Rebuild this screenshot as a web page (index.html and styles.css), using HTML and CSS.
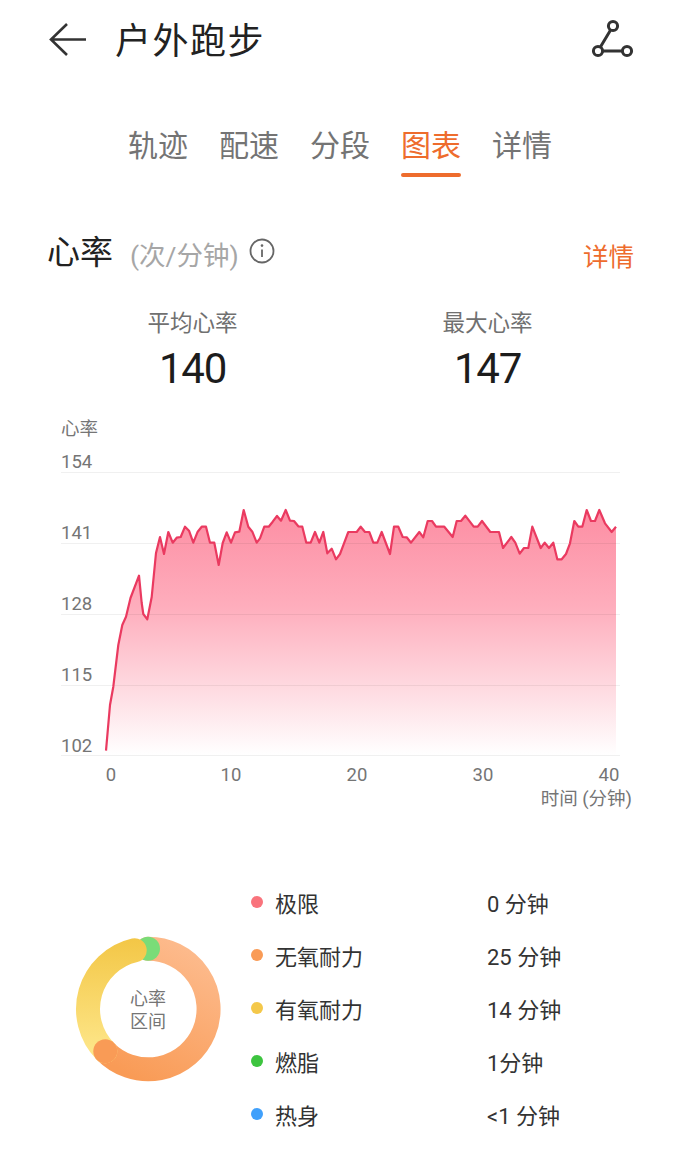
FILE: index.html
```html
<!DOCTYPE html>
<html lang="zh">
<head>
  <meta charset="UTF-8">
  <title>户外跑步</title>
  <link rel="stylesheet" href="styles.css">
</head>
<body>
  <div class="header">
    <svg class="back-icon" width="40" height="36" viewBox="0 0 40 36">
      <path d="M38 17.5H3M19 2L3 17.5L19 33"/>
    </svg>
    <h1 class="title">户外跑步</h1>
    <svg class="route-icon" width="46" height="42" viewBox="0 0 46 42">
      <circle cx="23" cy="7" r="4.6"/>
      <circle cx="8" cy="32" r="4.6"/>
      <circle cx="37" cy="32" r="4.6"/>
      <path d="M20.6 11L10.4 28M12.6 32H32.4"/>
    </svg>
  </div>

  <div class="tabs">
    <div class="tab">轨迹</div>
    <div class="tab">配速</div>
    <div class="tab">分段</div>
    <div class="tab active">图表</div>
    <div class="tab">详情</div>
  </div>

  <div class="section-head">
    <span class="section-title">心率</span>
    <span class="section-unit">(次/分钟)</span>
    <svg class="info-icon" width="26" height="26" viewBox="0 0 26 26">
      <circle cx="13" cy="13" r="11.5"/>
      <path d="M13 11.5V19"/>
      <circle class="info-dot" cx="13" cy="7.6" r="1.3"/>
    </svg>
    <span class="section-link">详情</span>
  </div>

  <div class="stats">
    <div class="stat">
      <div class="stat-label">平均心率</div>
      <div class="stat-value">140</div>
    </div>
    <div class="stat">
      <div class="stat-label">最大心率</div>
      <div class="stat-value">147</div>
    </div>
  </div>

  <svg class="chart" width="680" height="405" viewBox="0 410 680 405">
    <defs>
      <linearGradient id="area" gradientUnits="userSpaceOnUse" x1="0" y1="510" x2="0" y2="755">
        <stop offset="0" stop-color="#fd8ea3"/>
        <stop offset="0.4" stop-color="#feaebd"/>
        <stop offset="0.75" stop-color="#fedde3"/>
        <stop offset="1" stop-color="#ffffff"/>
      </linearGradient>
    </defs>
    <text class="axis" x="61" y="435">心率</text>
    <text class="axis" x="61" y="468">154</text>
    <text class="axis" x="61" y="539">141</text>
    <text class="axis" x="61" y="610">128</text>
    <text class="axis" x="61" y="681">115</text>
    <text class="axis" x="61" y="752">102</text>
    <polygon class="area" points="106,755 106,750.7 110,705 113.3,686.7 118.3,645 122.3,625 126,616.7 130.5,598 139,575.7 141.7,603 143.3,614 147.3,619.3 151.7,597 156,553 160,537 164,554 168.3,532 172.7,542.7 176.7,537.7 180.7,537 185,526.7 189,530.7 193.3,542.7 197.7,531.7 201.7,526.7 206,526.7 210,542.7 214.3,542.7 218.7,565 222.7,543 226.7,532.3 231,542.7 235,532.3 239.3,531.7 243.7,510 248.3,526.7 252.3,531.7 256.7,542.7 260,538.3 264.3,526.7 268.7,526.7 272.7,521.7 277,516 281,520.7 285.7,510 290,520.7 294,521 298.3,526.3 302.3,526.7 306.3,542.7 310.7,542.7 315,532 319.3,542.7 323.3,532 327.3,553.3 331.7,548.7 336,559.3 340,554 344,543.3 348.3,532 356.7,532 360.7,526.7 365,532 369.3,532 373.3,542.7 377.3,542.7 381.7,532 390,554 394,526.7 398.3,526.7 402.7,537 406.7,537.3 411,542.7 419.3,532 423.3,537.3 427.7,521 432,521 436,526.7 444.3,526.7 452.7,537 456.7,521 461,521 465.3,515.7 473.7,526.7 477.7,526.7 482,521 490.3,532 499,532 503,548 511.3,537 515.3,542.7 519.7,553.7 524,548 528.3,548 532.3,526.7 540.7,548 544.7,542.7 549,548 553.3,542.7 557.3,559.3 561.7,559.3 566,554 570,543.3 574.3,521 578.3,526.7 582.3,526.7 586.7,510 591,521 595,521 599.3,510 605,523.3 611.7,532 616,526.7 616,755"/>
    <path class="grid" d="M61 472.5H620M61 543.5H620M61 614.5H620M61 685.5H620M61 755.5H620"/>
    <polyline class="line" points="106,750.7 110,705 113.3,686.7 118.3,645 122.3,625 126,616.7 130.5,598 139,575.7 141.7,603 143.3,614 147.3,619.3 151.7,597 156,553 160,537 164,554 168.3,532 172.7,542.7 176.7,537.7 180.7,537 185,526.7 189,530.7 193.3,542.7 197.7,531.7 201.7,526.7 206,526.7 210,542.7 214.3,542.7 218.7,565 222.7,543 226.7,532.3 231,542.7 235,532.3 239.3,531.7 243.7,510 248.3,526.7 252.3,531.7 256.7,542.7 260,538.3 264.3,526.7 268.7,526.7 272.7,521.7 277,516 281,520.7 285.7,510 290,520.7 294,521 298.3,526.3 302.3,526.7 306.3,542.7 310.7,542.7 315,532 319.3,542.7 323.3,532 327.3,553.3 331.7,548.7 336,559.3 340,554 344,543.3 348.3,532 356.7,532 360.7,526.7 365,532 369.3,532 373.3,542.7 377.3,542.7 381.7,532 390,554 394,526.7 398.3,526.7 402.7,537 406.7,537.3 411,542.7 419.3,532 423.3,537.3 427.7,521 432,521 436,526.7 444.3,526.7 452.7,537 456.7,521 461,521 465.3,515.7 473.7,526.7 477.7,526.7 482,521 490.3,532 499,532 503,548 511.3,537 515.3,542.7 519.7,553.7 524,548 528.3,548 532.3,526.7 540.7,548 544.7,542.7 549,548 553.3,542.7 557.3,559.3 561.7,559.3 566,554 570,543.3 574.3,521 578.3,526.7 582.3,526.7 586.7,510 591,521 595,521 599.3,510 605,523.3 611.7,532 616,526.7"/>
    <text class="axis mid" x="111" y="781">0</text>
    <text class="axis mid" x="231" y="781">10</text>
    <text class="axis mid" x="357" y="781">20</text>
    <text class="axis mid" x="483" y="781">30</text>
    <text class="axis mid" x="609" y="781">40</text>
    <text class="axis end" x="632" y="805">时间 (分钟)</text>
  </svg>

  <div class="zones">
    <div class="donut">
      <svg width="152" height="152" viewBox="72 933 152 152">
        <defs>
          <linearGradient id="orange" gradientUnits="userSpaceOnUse" x1="190" y1="940" x2="120" y2="1070">
            <stop offset="0" stop-color="#fdbc8f"/>
            <stop offset="1" stop-color="#f99b56"/>
          </linearGradient>
          <linearGradient id="yellow" gradientUnits="userSpaceOnUse" x1="0" y1="940" x2="0" y2="1050">
            <stop offset="0" stop-color="#f3c747"/>
            <stop offset="1" stop-color="#fde587"/>
          </linearGradient>
        </defs>
        <path class="ring ring-orange" d="M148 948.7A60.3 60.3 0 1 1 105.3 1051.3"/>
        <circle class="ring-green" cx="148" cy="948.7" r="12"/>
        <path class="ring ring-yellow" d="M105.3 1051.3A60.3 60.3 0 0 1 134.7 950.3"/>
        <circle class="ring-tail" cx="105.3" cy="1051.3" r="12"/>
      </svg>
      <div class="donut-label">心率<br>区间</div>
    </div>
    <div class="legend">
      <div class="legend-row"><span class="dot dot-red"></span><span>极限</span><span>0 分钟</span></div>
      <div class="legend-row"><span class="dot dot-orange"></span><span>无氧耐力</span><span>25 分钟</span></div>
      <div class="legend-row"><span class="dot dot-yellow"></span><span>有氧耐力</span><span>14 分钟</span></div>
      <div class="legend-row"><span class="dot dot-green"></span><span>燃脂</span><span>1分钟</span></div>
      <div class="legend-row"><span class="dot dot-blue"></span><span>热身</span><span>&lt;1 分钟</span></div>
    </div>
  </div>
</body>
</html>
```

FILE: styles.css
```css
body {
  font-family: Roboto, "Noto Sans CJK SC", sans-serif;
  background-color: #fff;
  color: #222;
  width: 680px;
  height: 1164px;
  margin: 0;
  overflow: hidden;
}
.header {
  display: flex;
  align-items: center;
  height: 80px;
  padding: 0 46px 0 48px;
}
.back-icon {
  fill: none;
  stroke: #333;
  stroke-width: 2.6;
  margin-right: 27px;
}
.title {
  flex: 1;
  margin: 0 0 4px;
  font-size: 36px;
  font-weight: 400;
  letter-spacing: 1.5px;
}
.route-icon {
  fill: none;
  stroke: #333;
  stroke-width: 3;
  margin-right: -2px;
}
.tabs {
  display: flex;
  justify-content: center;
  gap: 31px;
  margin-top: 46px;
}
.tab {
  width: 60px;
  font-size: 30px;
  line-height: 40px;
  text-align: center;
  white-space: nowrap;
  color: #747474;
}
.tab::after {
  content: "";
  display: block;
  height: 4px;
  margin-top: 7px;
  border-radius: 2px;
}
.tab.active {
  color: #ee6c2d;
}
.tab.active::after {
  background-color: #ee6c2d;
}
.section-head {
  display: flex;
  align-items: center;
  height: 40px;
  margin-top: 56px;
  padding: 0 46px 0 47px;
}
.section-title {
  font-size: 33px;
  margin-right: 17px;
  margin-bottom: 6px;
}
.section-unit {
  font-size: 26.5px;
  color: #a6a6a6;
  margin-right: 10px;
}
.info-icon {
  fill: none;
  stroke: #666;
  stroke-width: 1.8;
  margin-bottom: 4px;
}
.info-dot {
  fill: #666;
  stroke: none;
}
.section-link {
  margin-left: auto;
  margin-top: 2px;
  font-size: 25.5px;
  color: #ee6c2d;
}
.stats {
  display: grid;
  grid-template-columns: 1fr 1fr;
  margin-top: 36px;
  padding: 0 45px;
  text-align: center;
}
.stat-label {
  font-size: 22.5px;
  line-height: 28px;
  color: #707070;
}
.stat-value {
  font-size: 42px;
  line-height: 50px;
  margin-top: 7px;
  letter-spacing: -1.3px;
  color: #1c1c1c;
}
.chart {
  display: block;
  margin-top: 16px;
}
.axis {
  font-size: 18.5px;
  fill: #757575;
}
.axis.mid {
  text-anchor: middle;
}
.axis.end {
  text-anchor: end;
}
.area {
  fill: url(#area);
}
.grid {
  fill: none;
  stroke: rgba(0, 0, 0, 0.06);
  stroke-width: 1;
}
.line {
  fill: none;
  stroke: #ea3a60;
  stroke-width: 2.2;
  stroke-linejoin: round;
}
.zones {
  display: flex;
  align-items: center;
  margin-top: 60px;
  padding-left: 72px;
}
.donut {
  position: relative;
  width: 152px;
  height: 152px;
  margin-top: 2px;
  margin-right: 27px;
}
.donut svg {
  display: block;
}
.ring {
  fill: none;
  stroke-width: 24;
  stroke-linecap: round;
}
.ring-orange {
  stroke: url(#orange);
}
.ring-yellow {
  stroke: url(#yellow);
}
.ring-green {
  fill: #7adc78;
}
.ring-tail {
  fill: #f99b56;
}
.donut-label {
  position: absolute;
  inset: 2px 0 0;
  display: flex;
  align-items: center;
  justify-content: center;
  text-align: center;
  font-size: 18px;
  line-height: 23px;
  color: #757575;
}
.legend {
  flex: 1;
}
.legend-row {
  display: grid;
  grid-template-columns: 12px 212px 1fr;
  column-gap: 12px;
  align-items: center;
  height: 53px;
  font-size: 22px;
  color: #333;
}
.legend-row > :last-child {
  margin-left: -12px;
}
.dot {
  width: 12px;
  height: 12px;
  border-radius: 50%;
}
.dot-red { background-color: #f9737c; }
.dot-orange { background-color: #f99b56; }
.dot-yellow { background-color: #f4c84a; }
.dot-green { background-color: #3dc43f; }
.dot-blue { background-color: #40a0fb; }
```
